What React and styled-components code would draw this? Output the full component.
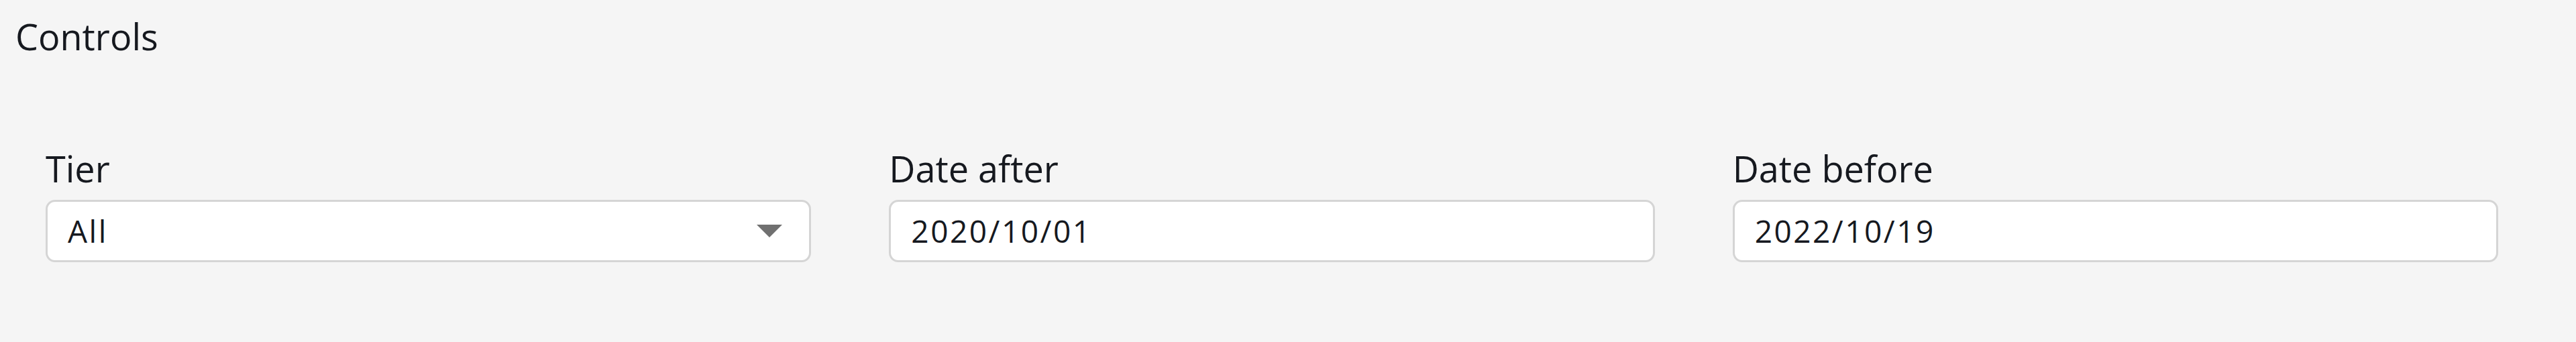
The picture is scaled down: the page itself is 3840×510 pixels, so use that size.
import React from "react";
import styled, { createGlobalStyle } from "styled-components";

const GlobalStyle = createGlobalStyle`
  html, body {
    margin: 0;
    padding: 0;
    background: #f5f5f5;
  }
  body {
    font-family: "Open Sans", "Noto Sans", sans-serif;
    color: #16191f;
  }
`;

const Page = styled.div`
  width: 3840px;
  height: 510px;
  background: #f5f5f5;
  box-sizing: border-box;
  padding-top: 17px;
`;

const Title = styled.div`
  font-size: 54px;
  line-height: 74px;
  padding-left: 23px;
  color: #16191f;
`;

const ControlsRow = styled.div`
  display: grid;
  grid-template-columns: repeat(3, 1fr);
  padding-left: 68px;
  margin-top: 123px;
`;

const Field = styled.div`
  display: flex;
  flex-direction: column;
  gap: 10px;
  padding-right: 116px;
`;

const Label = styled.label`
  font-size: 54px;
  line-height: 74px;
  color: #16191f;
`;

const Box = styled.div`
  position: relative;
  height: 93px;
  box-sizing: border-box;
  border: 3px solid #d5d5d5;
  border-radius: 14px;
  background: #fff;
  display: flex;
  align-items: center;
  padding: 0 30px;
  font-size: 46px;
  color: #16191f;
`;

const Value = styled.span`
  flex: 1;
  line-height: 63px;
  letter-spacing: 2.5px;
`;

const Caret = styled.svg`
  width: 38px;
  height: 19px;
  margin-right: 10px;
  flex-shrink: 0;
`;

function Select({ value }) {
  return (
    <Box>
      <Value>{value}</Value>
      <Caret viewBox="0 0 38 19">
        <path d="M0 0 H38 L19 19 Z" fill="#707070" />
      </Caret>
    </Box>
  );
}

function DateInput({ value }) {
  return (
    <Box>
      <Value>{value}</Value>
    </Box>
  );
}

export default function App() {
  return (
    <Page>
      <GlobalStyle />
      <Title>Controls</Title>
      <ControlsRow>
        <Field>
          <Label>Tier</Label>
          <Select value="All" />
        </Field>
        <Field>
          <Label>Date after</Label>
          <DateInput value="2020/10/01" />
        </Field>
        <Field>
          <Label>Date before</Label>
          <DateInput value="2022/10/19" />
        </Field>
      </ControlsRow>
    </Page>
  );
}
